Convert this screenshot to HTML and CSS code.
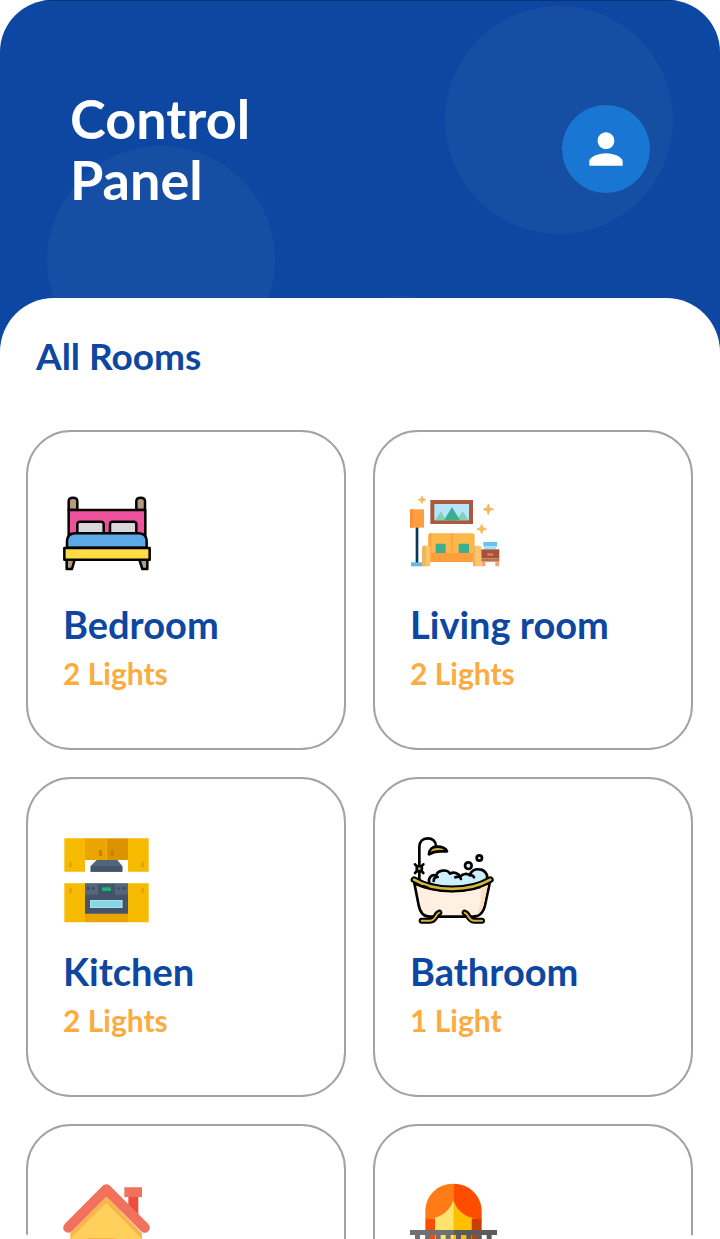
FILE: index.html
```html
<!DOCTYPE html>
<html lang="en">
<head>
<meta charset="utf-8">
<meta name="viewport" content="width=device-width, initial-scale=1">
<title>Control Panel</title>
<link rel="stylesheet" href="styles.css">
</head>
<body>
<div class="screen">
  <header class="header">
    <span class="bubble bubble-right"></span>
    <span class="bubble bubble-left"></span>
    <span class="bubble bubble-bottom"></span>
    <h1 class="title">Control<br>Panel</h1>
    <button class="avatar" type="button" aria-label="Profile">
      <svg class="avatar-icon" viewBox="0 0 24 24"><path fill="#fff" d="M12 12c2.200 0 4-1.800 4-4s-1.800-4-4-4-4 1.800-4 4 1.800 4 4 4zm0 2c-2.700 0-8 1.300-8 4v2h16v-2c0-2.700-5.300-4-8-4z"/></svg>
    </button>
  </header>
  <main class="sheet">
    <h2 class="section-title">All Rooms</h2>
    <div class="rooms">
      <a class="room" href="#bedroom">
        <svg class="room-icon" viewBox="39 15 264 264" stroke="#000" stroke-width="7.500" stroke-linejoin="round" aria-hidden="true">
          <path fill="#b59a7c" d="M56 75V49q0-11 13-11t13 11v26zM259 75V49q0-11 13-11t13 11v26z"/>
          <path fill="#ef529c" d="M56 75h230v85H56z"/>
          <path fill="#d8d8da" d="M82 145v-27q0-8 8-8h63q8 0 8 8v27zM180 145v-27q0-8 8-8h63q8 0 8 8v27z"/>
          <path fill="#5ca9e6" d="M51 188v-21q3-22 24-22h192q22 2 23 22v21z"/>
          <path fill="#b59a7c" d="M50 224h24l-8 28H50zM268 224h24v28h-15z"/>
          <path fill="#ffdb45" d="M43 189h256v35H43z"/>
        </svg>
        <span class="room-name">Bedroom</span>
        <span class="room-lights">2 Lights</span>
      </a>
      <a class="room" href="#living-room">
        <svg class="room-icon" viewBox="30 15 264 264" aria-hidden="true">
          <path fill="#f9b957" d="M66 33l3 8 9 3-9 3-3 8-3-8-9-3 9-3zM265 57l4 12 12 4-12 4-4 12-4-12-12-4 12-4zM245 118l4 10 10 4-10 4-4 10-4-10-10-4 10-4z" stroke="#f9b957" stroke-width="3" stroke-linejoin="round"/>
          <path fill="#aa593e" d="M91 45h128v72H91z"/>
          <path fill="#b4e5fd" d="M103 57h104v49H103z"/>
          <path fill="#84d2b4" d="M105 106l18-27 16 27zM168 106l20-27 18 27z"/>
          <path fill="#3eae91" d="M132 106l24-40 24 40z"/>
          <path fill="#0b3656" d="M47 126h8v108h-8z"/>
          <path fill="#ff9e3e" d="M30 73h42v55H30z"/>
          <path fill="#f7913c" d="M30 73h10v55H30z"/>
          <path fill="#63b8e5" d="M33 232h34v12H33z"/>
          <path fill="#fdb849" d="M85 209v-57q0-7 7-7h125q7 0 7 7v57z"/>
          <path fill="#fba840" d="M85 152q0-7 7-7h3v60H85zM152 145h7v60h-7z"/>
          <path fill="#ff9e3d" d="M88 204h135v27H88z"/>
          <path fill="#3dae91" d="M107 176h30v28h-30zM176 176h31v28h-31z"/>
          <path fill="#f8c66c" d="M66 244v-56q0-6 6-6h13q6 0 6 6v56zM219 244v-56q0-6 6-6h13q6 0 6 6v56z"/>
          <path fill="#efb75d" d="M66 188q0-6 6-6h6v62H66zM219 188q0-6 6-6h1v62h-7z"/>
          <path fill="#68c4ef" d="M250 171h41v13h-41z"/>
          <path fill="#a4dffa" d="M252 184h37v9h-37z"/>
          <path fill="#a55338" d="M244 193h54v27h-54z"/>
          <path fill="#bf6f49" d="M244 220h54v10h-54z"/>
          <path fill="#e2815c" d="M262 205h17v7h-17z"/>
          <path fill="#f7a17c" d="M245 230h11v14h-11zM286 230h11v14h-11z"/>
        </svg>
        <span class="room-name">Living room</span>
        <span class="room-lights">2 Lights</span>
      </a>
      <a class="room" href="#kitchen">
        <svg class="room-icon" viewBox="39 36 264 264" aria-hidden="true">
          <path fill="#f6ba00" d="M43 40h62v100H43zM234 40h62v100h-62zM43 175h62v117H43zM234 175h62v117h-62z"/>
          <path fill="#eba500" d="M105 40h65v65h-65zM105 265h129v27H105z"/>
          <path fill="#dc9300" d="M170 40h64v65h-64z"/>
          <path fill="#f3b01d" d="M168 40h3v65h-3z"/>
          <path fill="#e3a500" d="M57 110h9v17h-9zM273 110h9v17h-9zM57 188h9v17h-9zM273 188h9v17h-9z"/>
          <path fill="#c98000" d="M147 75h9v18h-9zM182 75h9v18h-9z"/>
          <path fill="#526478" d="M140 105h62l15 18v17h-95v-17z"/>
          <path fill="#42536a" d="M122 124h95v16h-95zM105 175h129v91H105z"/>
          <path fill="#56667a" d="M105 177h39v32h-39zM195 177h39v32h-39z"/>
          <g fill="#3e4d61"><circle cx="115" cy="190" r="5"/><circle cx="130" cy="190" r="4"/><circle cx="207" cy="190" r="4"/><circle cx="222" cy="190" r="5"/></g>
          <path fill="#19b475" d="M156 187h27v11h-27z"/>
          <path fill="#b6dce5" d="M120 225h98v24h-98z"/>
          <path fill="#85d6e6" d="M123 228h92v18h-92z"/>
        </svg>
        <span class="room-name">Kitchen</span>
        <span class="room-lights">2 Lights</span>
      </a>
      <a class="room" href="#bathroom">
        <svg class="room-icon" viewBox="30 36 264 264" fill="none" stroke="#000" stroke-width="8" stroke-linecap="round" stroke-linejoin="round" aria-hidden="true">
          <path d="M58 166V66c0-16 10-26 25-26s25 9 25 24"/>
          <path fill="#d4b13c" d="M87 88c0-15 10-23 24-23 16 0 26 4 30 14h-22q-18 0-32 9z"/>
          <path d="M45 118l25 26M70 118l-25 26"/>
          <circle cx="58" cy="131" r="8" fill="#d4b13c"/>
          <path fill="#cceffc" d="M89 176c-7-16 6-30 20-24 2-17 33-21 41-6 11-7 26-2 31 9 7-9 20-11 29-4 2-13 15-20 28-18 16 1 27 16 23 30l-10 17c-50 20-115 18-162-4z"/>
          <path d="M101 168q0-12 12-12M166 157q13-6 17 5M211 150q8 0 11 7"/>
          <circle cx="205" cy="122" r="10" fill="#cceffc"/>
          <circle cx="238" cy="99" r="8" fill="#cceffc"/>
          <path fill="#fff0e2" d="M43 175l13 66c4 20 12 34 32 34h130c21 0 32-14 37-34l14-66c-64 31-162 31-226 0z"/>
          <path fill="#fbdfbf" stroke="none" d="M242 187l22-8-13 61c-4 16-11 27-22 30 11-18 15-42 13-83z"/>
          <path stroke-width="20" d="M42 164c62 37 166 37 229 0"/>
          <path stroke="#d6b640" stroke-width="8" d="M42 164c62 37 166 37 229 0"/>
          <path stroke-width="18" d="M65 287h25c19 0 15-20 28-24M246 287h-23c-20 0-15-20-29-24"/>
          <path stroke="#d4b13c" stroke-width="6" d="M65 287h25c19 0 15-20 28-24M246 287h-23c-20 0-15-20-29-24"/>
          <path d="M70 184l13 4" stroke-width="8"/>
        </svg>
        <span class="room-name">Bathroom</span>
        <span class="room-lights">1 Light</span>
      </a>
      <a class="room" href="#house" aria-label="House">
        <svg class="room-icon" viewBox="39 42 264 264" aria-hidden="true">
          <path fill="#ee4d3d" d="M235 80h30v60h-30z"/>
          <path fill="#f2715d" d="M223 52h53v29h-53z"/>
          <path fill="#f8b64a" d="M61 190L169 80l107 110v116H61z"/>
          <path fill="#ffd15c" d="M61 207L169 99l107 108v99H61z"/>
          <path fill="#f8b64a" d="M112 204h85v102h-85z"/>
          <path fill="none" stroke="#f2715d" stroke-width="31" stroke-linecap="round" stroke-linejoin="round" d="M55 173L169 58l115 115"/>
        </svg>
      </a>
      <a class="room" href="#balcony" aria-label="Balcony">
        <svg class="room-icon" viewBox="30 42 264 264" aria-hidden="true">
          <path fill="#ff4b00" d="M76 145h30v161H76z"/>
          <path fill="#cc3d00" d="M214 145h31v161h-31z"/>
          <path fill="#ffe36c" d="M106 80h55v226h-55z"/>
          <path fill="#ffc000" d="M160 80h54v226h-54z"/>
          <path fill="#ff7b18" d="M160 41v48c-8 27-29 55-84 59v-24c0-47 36-83 84-83z"/>
          <path fill="#ff4d00" d="M160 41v48c8 27 29 55 85 60v-25c0-47-37-83-85-83z"/>
          <path fill="#707070" d="M30 180h130v15H30zM45 195h15v111H45zM76 195h15v111H76zM107 195h15v111h-15zM137 195h15v111h-15z"/>
          <path fill="#5b5b5b" d="M160 180h131v15H160zM168 195h15v111h-15zM199 195h15v111h-15zM229 195h15v111h-15zM260 195h15v111h-15z"/>
        </svg>
      </a>
    </div>
  </main>
</div>
</body>
</html>
```
FILE: styles.css
```css
* {
  box-sizing: border-box;
}

body {
  margin: 0;
  background: #fff;
  font-family: Lato, "Open Sans", sans-serif;
  font-weight: 700;
  color: #0d47a1;
}

.screen {
  height: 100vh;
  overflow: hidden;
  border-radius: 52px 52px 46px 46px;
}

.header {
  position: relative;
  display: flex;
  align-items: center;
  justify-content: space-between;
  padding: 87px 70px 142px;
  overflow: hidden;
  background: #0d47a1;
  border-top: 1px solid #093577;
}

.bubble {
  position: absolute;
  width: 228px;
  height: 228px;
  border-radius: 50%;
  background: rgba(255, 255, 255, 0.04);
}

.bubble-right {
  top: 5px;
  right: 47px;
}

.bubble-left {
  top: 145px;
  left: 47px;
}

.bubble-bottom {
  top: 295px;
  left: 288px;
}

.title {
  position: relative;
  margin: 0;
  font-size: 54px;
  line-height: 61px;
  color: #fff;
}

.avatar {
  position: relative;
  display: flex;
  align-items: center;
  justify-content: center;
  width: 88px;
  height: 88px;
  padding: 0;
  border: 0;
  border-radius: 50%;
  background: #1976d2;
}

.avatar-icon {
  width: 50px;
  height: 50px;
}

.sheet {
  position: relative;
  margin-top: -54px;
  padding: 34px 27px 27px 26px;
  border-radius: 54px 54px 0 0;
  background: #fff;
}

.section-title {
  margin: 0 10px 50px;
  font-size: 37px;
  line-height: 48px;
}

.rooms {
  display: grid;
  grid-template-columns: 1fr 1fr;
  gap: 27px;
}

.room {
  display: flex;
  flex-direction: column;
  align-items: flex-start;
  aspect-ratio: 1;
  padding: 58px 35px 35px;
  border: 2px solid #a3a3a3;
  border-radius: 45px;
  color: inherit;
  text-decoration: none;
}

.room-icon {
  width: 88px;
  height: 88px;
  overflow: visible;
}

.room-name {
  margin: 22px 0 7px;
  font-size: 38px;
  line-height: 48px;
}

.room-lights {
  font-size: 30px;
  line-height: 36px;
  color: #fbab40;
}
```
